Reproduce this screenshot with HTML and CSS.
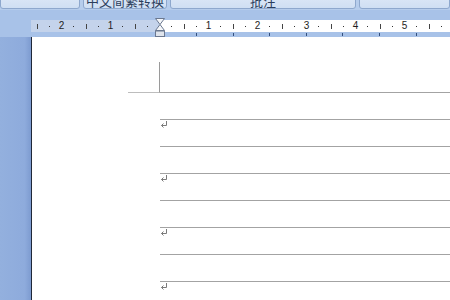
FILE: index.html
```html
<!DOCTYPE html>
<html lang="zh">
<head>
  <meta charset="UTF-8">
  <meta name="viewport" content="width=device-width, initial-scale=1.0">
  <title>文档</title>
  <link rel="stylesheet" href="styles.css">
</head>
<body>
  <div class="ribbon">
    <div class="tab tab-first"></div>
    <div class="tab tab-convert">中文简繁转换</div>
    <div class="tab tab-note">批注</div>
    <div class="tab tab-last"></div>
  </div>

  <div class="ruler-area">
    <div class="ruler-side"></div>
    <div class="ruler-wrap">
      <div class="ruler">
        <span class="cell"><i class="tick"></i></span>
        <span class="cell"><i class="dot"></i></span>
        <span class="cell">2</span>
        <span class="cell"><i class="dot"></i></span>
        <span class="cell"><i class="tick"></i></span>
        <span class="cell"><i class="dot"></i></span>
        <span class="cell">1</span>
        <span class="cell"><i class="dot"></i></span>
        <span class="cell"><i class="tick"></i></span>
        <span class="cell"><i class="dot"></i></span>
        <span class="cell cell-zero">
          <svg class="hourglass" width="10" height="19" viewBox="0 0 10 19">
            <polygon points="0.5,0.5 9.5,0.5 5,6.5" fill="#f4f6f9" stroke="#6b7890"/>
            <polygon points="5,6.5 9.5,12.5 0.5,12.5" fill="#f4f6f9" stroke="#6b7890"/>
            <rect x="0.5" y="13" width="9" height="5.5" fill="#dfe4ec" stroke="#6b7890"/>
          </svg>
        </span>
        <span class="cell"><i class="dot"></i></span>
        <span class="cell"><i class="tick"></i></span>
        <span class="cell"><i class="dot"></i></span>
        <span class="cell">1</span>
        <span class="cell"><i class="dot"></i></span>
        <span class="cell"><i class="tick"></i></span>
        <span class="cell"><i class="dot"></i></span>
        <span class="cell">2</span>
        <span class="cell"><i class="dot"></i></span>
        <span class="cell"><i class="tick"></i></span>
        <span class="cell"><i class="dot"></i></span>
        <span class="cell">3</span>
        <span class="cell"><i class="dot"></i></span>
        <span class="cell"><i class="tick"></i></span>
        <span class="cell"><i class="dot"></i></span>
        <span class="cell">4</span>
        <span class="cell"><i class="dot"></i></span>
        <span class="cell"><i class="tick"></i></span>
        <span class="cell"><i class="dot"></i></span>
        <span class="cell">5</span>
        <span class="cell"><i class="dot"></i></span>
        <span class="cell"><i class="tick"></i></span>
        <span class="cell"><i class="dot"></i></span>
      </div>
      <div class="ruler-marks">
        <span class="mark"></span>
        <span class="mark"></span>
        <span class="mark"></span>
        <span class="mark"></span>
        <span class="mark"></span>
        <span class="mark"></span>
        <span class="mark"></span>
      </div>
    </div>
  </div>

  <div class="main">
    <div class="sidebar"></div>
    <div class="page">
      <div class="corner"></div>
      <div class="rows">
        <div class="row"></div>
        <div class="row"><svg class="ret" width="8" height="8" viewBox="0 0 8 8"><path d="M6.5 0 V4.5 H1.5 M3.5 2.5 L1.5 4.5 L3.5 6.5" fill="none" stroke="#7a7a7a"/></svg></div>
        <div class="row"></div>
        <div class="row"><svg class="ret" width="8" height="8" viewBox="0 0 8 8"><path d="M6.5 0 V4.5 H1.5 M3.5 2.5 L1.5 4.5 L3.5 6.5" fill="none" stroke="#7a7a7a"/></svg></div>
        <div class="row"></div>
        <div class="row"><svg class="ret" width="8" height="8" viewBox="0 0 8 8"><path d="M6.5 0 V4.5 H1.5 M3.5 2.5 L1.5 4.5 L3.5 6.5" fill="none" stroke="#7a7a7a"/></svg></div>
        <div class="row"></div>
        <div class="row"><svg class="ret" width="8" height="8" viewBox="0 0 8 8"><path d="M6.5 0 V4.5 H1.5 M3.5 2.5 L1.5 4.5 L3.5 6.5" fill="none" stroke="#7a7a7a"/></svg></div>
      </div>
    </div>
  </div>
</body>
</html>
```

FILE: styles.css
```css
body { margin: 0; width: 450px; height: 300px; overflow: hidden; background: #a8c2e8; font-family: "Liberation Sans", "Noto Sans CJK SC", sans-serif; }

.ribbon { height: 10px; overflow: hidden; display: flex; gap: 3px; background: #b6cdec; }
.tab { height: 16px; margin-top: -7px; box-sizing: border-box; border: 1px solid #8ea8cd; border-radius: 0 0 3px 3px; background: linear-gradient(#dfe9f7, #cfdff3); font-size: 13px; line-height: 16px; text-align: center; color: #2c3e5c; white-space: nowrap; }
.tab-first { width: 80px; flex: none; }
.tab-convert { width: 84px; flex: none; }
.tab-note { width: 186px; flex: none; }
.tab-last { flex: 1; }

.ruler-area { display: flex; height: 27px; }
.ruler-side { flex: none; width: 31px; background: #a8c2e8; }
.ruler-wrap { flex: 1; min-width: 0; padding-top: 10px; }
.ruler { display: flex; height: 12px; background: linear-gradient(to right, #c4d3eb 0 128px, #ffffff 128px); color: #1e1e1e; font-size: 10px; line-height: 12px; }
.cell { flex: 0 0 12.25px; display: flex; align-items: center; justify-content: center; }
.tick { display: block; width: 1px; height: 5px; background: #444; }
.dot { display: block; width: 1px; height: 1px; background: #333; }
.cell-zero { align-items: flex-start; }
.hourglass { position: relative; z-index: 1; margin-top: -2px; flex: none; }
.ruler-marks { display: flex; height: 5px; padding: 1px 0 0 165px; box-sizing: border-box; }
.mark { flex: 0 0 36.6px; height: 3px; box-sizing: border-box; border-left: 1px solid #34507f; }

.main { display: flex; height: 263px; }
.sidebar { flex: none; width: 31px; border-right: 1px solid #1f2738; background: linear-gradient(to right, #93b0de 0, #8eabdc 80%, #7d9bd0 100%); }
.page { flex: 1; background: #fff; }
.corner { width: 31px; height: 30px; margin: 25px 0 0 96px; border-right: 1px solid #9a9a9a; border-bottom: 1px solid #bdbdbd; }
.rows { margin: -1px 0 0 128px; }
.row { height: 26px; border-top: 1px solid #a3a3a3; }
.ret { display: block; margin-top: 1px; }
```
